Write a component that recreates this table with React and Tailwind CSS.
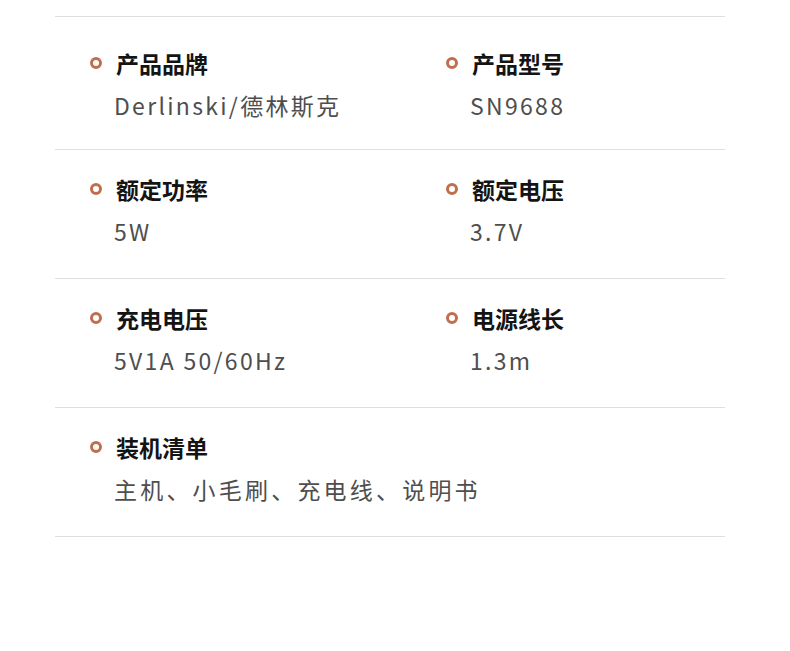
import React from 'react';

const specs = [
  [
    { label: '产品品牌', value: 'Derlinski/德林斯克' },
    { label: '产品型号', value: 'SN9688' },
  ],
  [
    { label: '额定功率', value: '5W' },
    { label: '额定电压', value: '3.7V' },
  ],
  [
    { label: '充电电压', value: '5V1A 50/60Hz' },
    { label: '电源线长', value: '1.3m' },
  ],
  [{ label: '装机清单', value: '主机、小毛刷、充电线、说明书', wide: true }],
];

const SpecItem = ({ label, value, wide }) => (
  <div className="flex flex-col">
    <div className="flex items-center h-[32px]">
      <span className="w-[12px] h-[12px] rounded-full border-[3px] border-[#bf6f4d] shrink-0" />
      <span className="ml-[14px] text-[23px] leading-[32px] font-bold text-[#141414]">{label}</span>
    </div>
    <div
      className={`mt-[10px] ml-[24px] text-[23px] leading-[32px] whitespace-nowrap text-[#4e4e4e] ${
        wide ? 'tracking-[3.2px]' : 'tracking-[2.3px]'
      }`}
    >
      {value}
    </div>
  </div>
);

export default function App() {
  return (
    <div
      className="w-[790px] h-[651px] bg-white pt-[16px]"
      style={{ fontFamily: '"Noto Sans CJK SC", "Noto Sans", sans-serif' }}
    >
      <div className="mx-[55px] w-[670px] border-t border-[#e2dedb]">
        {specs.map((row, i) => (
          <div
            key={i}
            className={`grid grid-cols-[356px_1fr] pl-[35px] border-b border-[#e2dedb] ${
              i === 0 ? 'pt-[30px] h-[133px]' : 'pt-[23px] h-[129px]'
            }`}
          >
            {row.map((item) => (
              <SpecItem key={item.label} {...item} />
            ))}
          </div>
        ))}
      </div>
    </div>
  );
}
